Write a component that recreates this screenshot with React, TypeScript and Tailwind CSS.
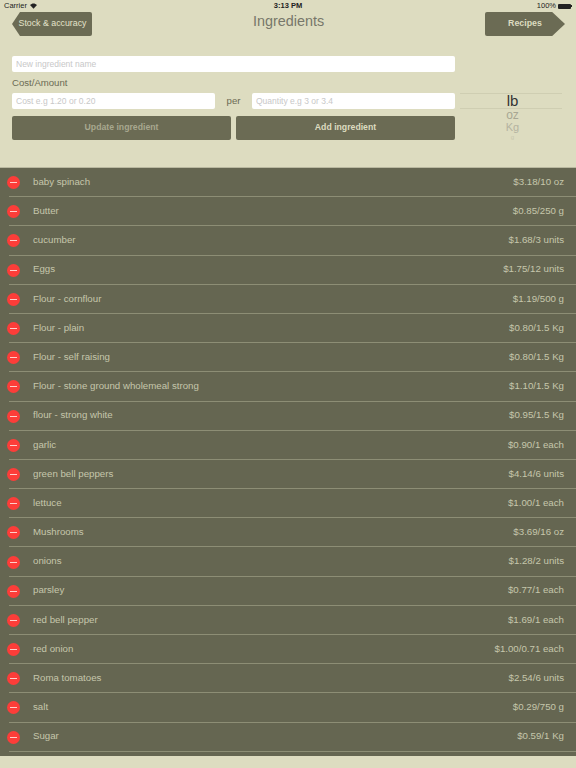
import React from "react";

const rows: [string, string][] = [
  ["baby spinach", "$3.18/10 oz"],
  ["Butter", "$0.85/250 g"],
  ["cucumber", "$1.68/3 units"],
  ["Eggs", "$1.75/12 units"],
  ["Flour - cornflour", "$1.19/500 g"],
  ["Flour - plain", "$0.80/1.5 Kg"],
  ["Flour - self raising", "$0.80/1.5 Kg"],
  ["Flour - stone ground wholemeal strong", "$1.10/1.5 Kg"],
  ["flour - strong white", "$0.95/1.5 Kg"],
  ["garlic", "$0.90/1 each"],
  ["green bell peppers", "$4.14/6 units"],
  ["lettuce", "$1.00/1 each"],
  ["Mushrooms", "$3.69/16 oz"],
  ["onions", "$1.28/2 units"],
  ["parsley", "$0.77/1 each"],
  ["red bell pepper", "$1.69/1 each"],
  ["red onion", "$1.00/0.71 each"],
  ["Roma tomatoes", "$2.54/6 units"],
  ["salt", "$0.29/750 g"],
  ["Sugar", "$0.59/1 Kg"],
];

function Field({ text, className }: { text: string; className: string }) {
  return (
    <div className={`h-4 rounded-[2px] bg-white pl-1 text-[8.5px] leading-4 text-[#c8c8c8] ${className}`}>{text}</div>
  );
}

export default function App() {
  return (
    <div className="flex h-[768px] w-[576px] flex-col overflow-hidden bg-[#dddcc0] font-['Liberation_Sans',sans-serif]">
      <div className="h-[167px] shrink-0">
        <div className="flex h-[12px] items-center justify-between px-1 text-[7.5px] text-[#222]">
          <div className="flex w-[100px] items-center gap-[3px]">
            <span>Carrier</span>
            <svg width="7" height="6" viewBox="0 0 14 11" fill="#222"><path d="M7 11 0 3.5C4 -.8 10 -.8 14 3.5Z" /></svg>
          </div>
          <span className="font-bold">3:13 PM</span>
          <div className="flex w-[100px] items-center justify-end gap-[2px]">
            <span>100%</span>
            <span className="h-[5px] w-[13px] rounded-[1px] bg-[#222]" />
            <span className="-ml-[2px] h-[2px] w-[1px] bg-[#222]" />
          </div>
        </div>
        <div className="flex h-[24px] items-center justify-between pl-3 pr-[11px]">
          <div className="flex h-[24px] w-[80px] items-center justify-center rounded-[2px] bg-[#6b6b54] pl-[1px] text-[8.8px] text-[#e4e3cb] [clip-path:polygon(10%_0,100%_0,100%_100%,10%_100%,0_50%)]">
            Stock &amp; accuracy
          </div>
          <div className="-mt-[5px] text-[14.4px] text-[#77776a]">Ingredients</div>
          <div className="flex h-[24px] w-[80px] items-center justify-center rounded-[2px] bg-[#6b6b54] text-[8.8px] font-bold text-[#dddcc0] [clip-path:polygon(0_0,84%_0,100%_50%,84%_100%,0_100%)]">
            Recipes
          </div>
        </div>
        <div className="mt-5 pl-3 pr-[13px]">
          <Field text="New ingredient name" className="w-[443px]" />
          <div className="mt-[3px] h-[16px] text-[9.6px] leading-4 text-[#6b6b54]">Cost/Amount</div>
          <div className="mt-[2px] flex items-start">
            <Field text="Cost e.g 1.20 or 0.20" className="w-[203px]" />
            <div className="w-[37px] text-center text-[9.6px] leading-4 text-[#6b6b54]">per</div>
            <Field text="Quantity e.g 3 or 3.4" className="w-[203px]" />
            <div className="ml-[5px] flex h-4 w-[102px] items-center justify-center border-y border-[#cfceb2] pl-[3px] text-[15px] text-[#333]">lb</div>
          </div>
          <div className="flex">
            <div className="mt-[7px] flex w-[443px] gap-[5px]">
              <div className="flex h-6 w-[219px] items-center justify-center rounded-[2px] bg-[#6b6b54] text-[8.7px] font-bold text-[#a8a88f]">Update ingredient</div>
              <div className="flex h-6 w-[219px] items-center justify-center rounded-[2px] bg-[#6b6b54] text-[8.7px] font-bold text-[#dddcc0]">Add ingredient</div>
            </div>
            <div className="ml-[5px] flex w-[102px] flex-col items-center pl-[3px]">
              <span className="text-[12px] leading-[12px] text-[#a8a793]">oz</span>
              <span className="text-[11px] leading-[12px] text-[#b4b3a0]">Kg</span>
              <span className="text-[6px] leading-[8px] text-[#c8c7ae]">g</span>
            </div>
          </div>
        </div>
      </div>
      <div className="h-[589px] shrink-0 border-t border-[#b9b89f] bg-[#656651]">
        {rows.map(([name, price]) => (
          <div key={name} className="flex h-[29.2px] flex-col">
            <div className="flex flex-1 items-center pl-[7px]">
              <div className="mt-[1px] flex h-[13px] w-[13px] shrink-0 items-center justify-center rounded-full bg-[#fc3d39]">
                <span className="h-[1px] w-[7px] bg-[#ffd0cc]" />
              </div>
              <div className="ml-[13px] flex flex-1 items-center justify-between pr-3 text-[9.7px] text-[#c6c6ac]">
                <span>{name}</span>
                <span>{price}</span>
              </div>
            </div>
            <div className="ml-[9px] h-px shrink-0 bg-[#8d8e75]" />
          </div>
        ))}
      </div>
    </div>
  );
}
